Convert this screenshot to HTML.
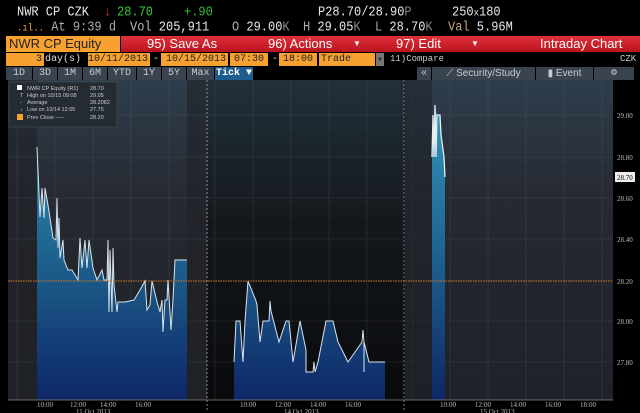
<!DOCTYPE html>
<html><head><meta charset="utf-8"><style>
*{margin:0;padding:0;box-sizing:border-box}
body{width:640px;height:413px;background:#000;overflow:hidden;position:relative;font-family:"Liberation Mono","DejaVu Sans Mono",monospace;color:#e8e8e8}
.a{position:absolute;white-space:nowrap}
.s{font-family:"Liberation Sans",sans-serif}
.r1{font-size:12px;top:4px;transform:scaleY(1.15);transform-origin:0 0}
.r2{font-size:12px;top:19px;transform:scaleY(1.15);transform-origin:0 0}
.o{background:#f7a230;color:#222}
.t{background:#3a4450;color:#c8ccd2;font-size:10px;top:67px;height:13px;line-height:13px;text-align:center}
</style></head><body>
<div class="a r1" style="left:17px">NWR CP CZK</div>
<div class="a r1" style="left:104px;color:#d33">↓</div>
<div class="a r1" style="left:117px;color:#3c3">28.70</div>
<div class="a r1" style="left:184px;color:#3b3">+.90</div>
<div class="a r1" style="left:318px">P28.70/28.90<span style="color:#888">P</span></div>
<div class="a r1" style="left:452px">250<span style="font-size:9px">x</span>180</div>
<div class="a r2" style="left:17px"><span style="color:#f7a230;font-size:9px">.ıl..</span> <span style="color:#aaa">At 9:39 d</span></div>
<div class="a r2" style="left:130px"><span style="color:#bbb">Vol</span> 205,911</div>
<div class="a r2" style="left:232px"><span style="color:#aaa">O</span> 29.00<span style="color:#888">K</span></div>
<div class="a r2" style="left:303px"><span style="color:#aaa">H</span> 29.05<span style="color:#888">K</span></div>
<div class="a r2" style="left:375px"><span style="color:#aaa">L</span> 28.70<span style="color:#888">K</span></div>
<div class="a r2" style="left:448px"><span style="color:#c9a37a">Val</span> 5.96M</div>

<div class="a o s" style="left:6px;top:36px;width:114px;height:16px;font-size:13px;line-height:16px;padding-left:3px">NWR CP Equity</div>
<div class="a s" style="left:121px;top:36px;width:519px;height:16px;background:linear-gradient(#e0303a,#b8141e);color:#fff;font-size:13px;line-height:16px">
<span class="a" style="left:26px">95) Save As</span><span class="a" style="left:147px">96) Actions</span><span class="a" style="left:232px;font-size:8px">▼</span><span class="a" style="left:275px">97) Edit</span><span class="a" style="left:350px;font-size:8px">▼</span><span class="a" style="left:419px">Intraday Chart</span></div>

<div class="a o" style="left:6px;top:53px;width:38px;height:13px;font-size:10px;text-align:right;padding-right:2px;line-height:13px">3</div>
<div class="a" style="left:45px;top:53px;font-size:10px;line-height:13px;color:#ddd">day(s)</div>
<div class="a o" style="left:88px;top:53px;width:62px;height:13px;font-size:10px;text-align:right;line-height:13px;padding-right:2px">10/11/2013</div>
<div class="a" style="left:153px;top:53px;font-size:10px;line-height:13px">-</div>
<div class="a o" style="left:161px;top:53px;width:67px;height:13px;font-size:10px;text-align:right;line-height:13px;padding-right:2px">10/15/2013</div>
<div class="a o" style="left:230px;top:53px;width:38px;height:13px;font-size:10px;line-height:13px;text-align:center">07:30</div>
<div class="a" style="left:272px;top:53px;font-size:10px;line-height:13px">-</div>
<div class="a o" style="left:279px;top:53px;width:38px;height:13px;font-size:10px;line-height:13px;text-align:center">18:00</div>
<div class="a o" style="left:319px;top:53px;width:56px;height:13px;font-size:10px;line-height:13px;padding-left:2px">Trade</div>
<div class="a" style="left:376px;top:53px;width:8px;height:13px;background:#777;font-size:6px;line-height:13px;color:#222;text-align:center">▼</div>
<div class="a" style="left:390px;top:53px;font-size:9px;line-height:13px;color:#ccc">11)Compare</div>
<div class="a" style="left:620px;top:53px;font-size:9px;line-height:13px;color:#ccc">CZK</div>

<div class="a t" style="left:6px;width:26px">1D</div>
<div class="a t" style="left:33px;width:24px">3D</div>
<div class="a t" style="left:58px;width:24px">1M</div>
<div class="a t" style="left:83px;width:24px">6M</div>
<div class="a t" style="left:108px;width:28px">YTD</div>
<div class="a t" style="left:137px;width:24px">1Y</div>
<div class="a t" style="left:162px;width:24px">5Y</div>
<div class="a t" style="left:187px;width:27px">Max</div>
<div class="a t" style="left:215px;width:38px;background:#1d5c8c;color:#fff;font-weight:bold">Tick ▼</div>
<div class="a t" style="left:254px;width:162px;background:#000"></div>
<div class="a t" style="left:417px;width:14px">«</div>
<div class="a t s" style="left:432px;width:103px">⟋ Security/Study</div>
<div class="a t s" style="left:536px;width:57px">▮ Event</div>
<div class="a t" style="left:594px;width:40px">⚙</div>

<svg class="a" style="left:0;top:80px" width="640" height="333" viewBox="0 80 640 333">
<defs>
<linearGradient id="bg1" x1="0" y1="0" x2="0" y2="1"><stop offset="0" stop-color="#2e3e4c"/><stop offset=".35" stop-color="#272a33"/><stop offset=".6" stop-color="#23262d"/><stop offset="1" stop-color="#1f2228"/></linearGradient>
<linearGradient id="bg2" x1="0" y1="0" x2="0" y2="1"><stop offset="0" stop-color="#22303a"/><stop offset=".45" stop-color="#14181c"/><stop offset="1" stop-color="#090a0c"/></linearGradient>
<linearGradient id="f" x1="0" y1="100" x2="0" y2="400" gradientUnits="userSpaceOnUse"><stop offset="0" stop-color="#3596bd"/><stop offset=".5" stop-color="#1e6590"/><stop offset="1" stop-color="#0e2766"/></linearGradient>
</defs>
<rect x="8" y="80" width="605" height="320" fill="url(#bg1)"/>
<rect x="8" y="80" width="29" height="320" fill="#1f2226" opacity=".6"/>
<rect x="187" y="80" width="20" height="320" fill="#1f2226" opacity=".6"/>
<rect x="207" y="80" width="198" height="320" fill="url(#bg2)"/>
<g stroke="#6a7480" stroke-width=".6" stroke-dasharray="1 1" opacity=".6">
<line x1="8" y1="115" x2="613" y2="115"/><line x1="8" y1="157" x2="613" y2="157"/><line x1="8" y1="198" x2="613" y2="198"/><line x1="8" y1="239" x2="613" y2="239"/><line x1="8" y1="321" x2="613" y2="321"/><line x1="8" y1="362" x2="613" y2="362"/>
<line x1="17" y1="80" x2="17" y2="400"/><line x1="55" y1="80" x2="55" y2="400"/><line x1="93" y1="80" x2="93" y2="400"/><line x1="131" y1="80" x2="131" y2="400"/><line x1="169" y1="80" x2="169" y2="400"/>
<line x1="215" y1="80" x2="215" y2="400"/><line x1="253" y1="80" x2="253" y2="400"/><line x1="291" y1="80" x2="291" y2="400"/><line x1="329" y1="80" x2="329" y2="400"/><line x1="367" y1="80" x2="367" y2="400"/>
<line x1="413" y1="80" x2="413" y2="400"/><line x1="450" y1="80" x2="450" y2="400"/><line x1="488" y1="80" x2="488" y2="400"/><line x1="526" y1="80" x2="526" y2="400"/><line x1="564" y1="80" x2="564" y2="400"/><line x1="602" y1="80" x2="602" y2="400"/>
</g>
<g stroke="#aaa" stroke-width=".8" stroke-dasharray="2 2"><line x1="207" y1="80" x2="207" y2="410"/><line x1="404" y1="80" x2="404" y2="410"/></g>
<path fill="url(#f)" d="M37,147 40,217 42,188 44,218 45,188 48,205 53,238 56,240 57,198 58,248 59,218 60,258 63,240 64,260 68,270 72,270 78,280 80,238 82,268 85,240 87,268 89,240 93,268 97,280 102,270 104,280 107,280 108,240 109,312 110,250 112,312 113,248 114,285 117,312 118,302 125,302 134,300 140,290 145,281 147,310 150,305 152,281 157,302 160,312 162,300 163,332 165,300 167,300 168,280 171,330 173,300 175,260 187,260 187,400 37,400Z"/>
<polyline fill="none" stroke="#d8e4ec" stroke-width="1" points="37,147 40,217 42,188 44,218 45,188 48,205 53,238 56,240 57,198 58,248 59,218 60,258 63,240 64,260 68,270 72,270 78,280 80,238 82,268 85,240 87,268 89,240 93,268 97,280 102,270 104,280 107,280 108,240 109,312 110,250 112,312 113,248 114,285 117,312 118,302 125,302 134,300 140,290 145,281 147,310 150,305 152,281 157,302 160,312 162,300 163,332 165,300 167,300 168,280 171,330 173,300 175,260 187,260"/>
<path fill="url(#f)" d="M234,362 236,321 240,321 243,362 245,321 248,281 256,301 257,305 260,342 263,321 269,321 270,301 271,311 279,342 286,321 289,321 293,362 300,321 306,350 306,372 313,372 315,372 318,362 326,321 333,321 338,342 348,362 362,342 364,342 364,372 364,342 369,362 385,362 385,400 234,400Z"/>
<polyline fill="none" stroke="#d8e4ec" stroke-width="1" points="234,362 236,321 240,321 243,362 245,321 248,281 256,301 257,305 260,342 263,321 269,321 270,301 271,311 279,342 286,321 289,321 293,362 300,321 306,350 306,372 313,372 314,362 315,372 318,362 326,321 333,321 338,342 348,362 362,342 363,330 364,342 364,372 364,342 369,362 385,362"/>
<rect x="404" y="80" width="28" height="320" fill="#1c2026" opacity=".5"/>
<path fill="url(#f)" d="M432,157 434,115 435,157 435,105 437,115 440,115 441,135 444,157 445,177 445,400 432,400Z"/>
<polyline fill="none" stroke="#e6eef2" stroke-width="1.3" points="432,157 433,115 434,157 435,105 436,157 437,115 440,115 441,135 444,157 445,177"/>
<line x1="8" y1="281" x2="613" y2="281" stroke="#e07a20" stroke-width="1" stroke-dasharray="1.5 1"/>
<line x1="8" y1="400" x2="613" y2="400" stroke="#888" stroke-width=".7"/>
<g fill="#bbb" font-family="Liberation Serif,serif" font-size="7">
<text x="617" y="118">29.00</text><text x="617" y="160">28.80</text><text x="617" y="201">28.60</text><text x="617" y="242">28.40</text><text x="617" y="284">28.20</text><text x="617" y="324">28.00</text><text x="617" y="365">27.80</text>
<rect x="615" y="172" width="20" height="10" fill="#eee"/><text x="617" y="180" fill="#000">28.70</text>
<text x="37" y="407">10:00</text><text x="70" y="407">12:00</text><text x="100" y="407">14:00</text><text x="135" y="407">16:00</text><text x="76" y="414">11 Oct 2013</text>
<text x="240" y="407">10:00</text><text x="275" y="407">12:00</text><text x="310" y="407">14:00</text><text x="345" y="407">16:00</text><text x="284" y="414">14 Oct 2013</text>
<text x="440" y="407">10:00</text><text x="475" y="407">12:00</text><text x="510" y="407">14:00</text><text x="545" y="407">16:00</text><text x="580" y="407">18:00</text><text x="480" y="414">15 Oct 2013</text>
</g>
<rect x="9" y="82" width="108" height="45" fill="#252b33" stroke="#555" stroke-width=".5"/>
<g fill="#ccc" font-family="Liberation Sans,sans-serif" font-size="5.5">
<rect x="17" y="85" width="5" height="5" fill="#fff"/><text x="27" y="90">NWR CP Equity (R1)</text><text x="90" y="90">28.70</text>
<text x="20" y="97">T</text><text x="27" y="97">High on 10/15 09:08</text><text x="90" y="97">29.05</text>
<text x="20" y="104">-</text><text x="27" y="104">Average</text><text x="90" y="104">28.2082</text>
<text x="20" y="111">↓</text><text x="27" y="111">Low on 10/14 12:05</text><text x="90" y="111">27.75</text>
<rect x="17" y="114" width="6" height="6" fill="#f7a230"/><text x="27" y="119">Prev Close -----</text><text x="90" y="119">28.20</text>
</g>
</svg>
</body></html>
